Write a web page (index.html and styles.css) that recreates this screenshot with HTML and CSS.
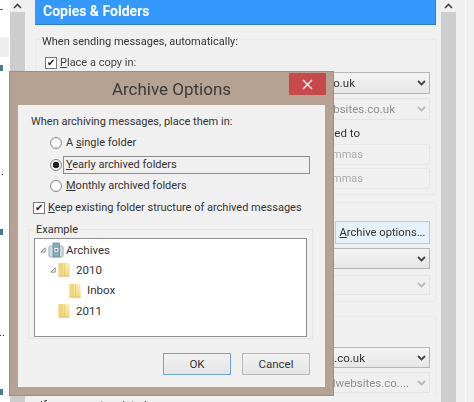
FILE: index.html
```html
<!DOCTYPE html>
<html lang="en">
<head>
<meta charset="utf-8">
<title>Archive Options</title>
<link rel="stylesheet" href="styles.css">
</head>
<body>
<svg class="defs" width="0" height="0" aria-hidden="true">
  <defs>
    <linearGradient id="fg" x1="0" y1="0" x2="0" y2="1"><stop offset="0" stop-color="#fbeeb0"/><stop offset="1" stop-color="#f3d77e"/></linearGradient>
    <symbol id="folder" viewBox="0 0 14 16">
      <path d="M1 2.5 Q1 1 2.5 1 H8 V15 H2 Q1 15 1 14 Z" fill="#f1d47c"/>
      <path d="M6 1 H11 Q13 1 13 3 V15 H6 Z" fill="url(#fg)"/>
      <path d="M1 14.5 H13 V15.6 H1 Z" fill="#dcbc62"/>
      <path d="M7.5 1 V15" stroke="#e3c66f" stroke-width=".8"/>
    </symbol>
    <symbol id="twisty" viewBox="0 0 7 7">
      <path d="M6 1 V6 H1 Z" fill="none" stroke="#777" stroke-width="1"/>
    </symbol>
    <symbol id="caret" viewBox="0 0 9 6">
      <path d="M1 1 L4.5 4.5 L8 1" fill="none" stroke="currentColor" stroke-width="1.8"/>
    </symbol>
  </defs>
</svg>

<div class="app">
  <aside class="nav">
    <span class="mark mark-dash">-</span>
    <span class="nav-row"></span>
    <span class="mark mark-a"></span>
    <span class="mark mark-dot">.</span>
    <span class="mark mark-b"></span>
    <span class="mark mark-dots">..</span>
    <span class="mark mark-c"></span>
  </aside>

  <div class="scroll"><span class="scroll-btn"><svg class="up" viewBox="0 0 9 6"><path d="M1 5 L4.5 1.5 L8 5" fill="none" stroke="#444" stroke-width="1.6"/></svg></span><span class="scroll-track"></span></div>

  <main class="main">
    <h1 class="banner">Copies &amp; Folders</h1>

    <section class="group group-one">
      <p class="legend">When sending messages, automatically:</p>
      <label class="check-row"><span class="check">✔</span><span><u>P</u>lace a copy in:</span></label>
      <div class="select sel-a"><span>.co.uk</span><svg class="caret"><use href="#caret"/></svg></div>
      <div class="select off sel-b"><span>websites.co.uk</span><svg class="caret"><use href="#caret"/></svg></div>
      <p class="note">ied to</p>
      <div class="input"><span>mmas</span></div>
      <div class="input in-two"><span>mmas</span></div>
    </section>

    <section class="group group-two">
      <button class="archive-btn" type="button"><u>A</u>rchive options...</button>
      <div class="select sel-c"><span></span><svg class="caret"><use href="#caret"/></svg></div>
      <div class="select off sel-d"><span></span><svg class="caret"><use href="#caret"/></svg></div>
    </section>

    <section class="group group-three">
      <div class="select sel-e"><span>s.co.uk</span><svg class="caret"><use href="#caret"/></svg></div>
      <div class="select off sel-f"><span>edwebsites.co....</span><svg class="caret"><use href="#caret"/></svg></div>
    </section>
    <p class="cut">If you are not updated</p>
  </main>

  <div class="scroll scroll-right"><span class="scroll-btn"><svg class="up" viewBox="0 0 9 6"><path d="M1 5 L4.5 1.5 L8 5" fill="none" stroke="#444" stroke-width="1.6"/></svg></span><span class="scroll-track"></span></div>
  <div class="edge"></div>
</div>

<div class="dialog" role="dialog">
  <header class="dialog-head">
    <span class="dialog-title">Archive Options</span>
    <span class="close">
      <svg width="11" height="11" viewBox="0 0 11 11"><path d="M1 1 L10 10 M10 1 L1 10" stroke="#fff" stroke-width="1.4"/></svg>
    </span>
  </header>
  <div class="dialog-body">
    <p class="intro">When archiving messages, place them in:</p>
    <div class="radios">
      <label class="radio-row"><span class="radio"></span><span class="radio-text">A <u>s</u>ingle folder</span></label>
      <label class="radio-row"><span class="radio on"></span><span class="radio-text focus"><u>Y</u>early archived folders</span></label>
      <label class="radio-row"><span class="radio"></span><span class="radio-text"><u>M</u>onthly archived folders</span></label>
    </div>
    <label class="keep-row"><span class="check">✔</span><span><u>K</u>eep existing folder structure of archived messages</span></label>
    <fieldset class="example">
      <legend>Example</legend>
      <ul class="tree">
        <li class="node">
          <svg class="twisty"><use href="#twisty"/></svg>
          <svg class="arch" viewBox="0 0 16 16" width="16" height="16">
            <rect x="1" y="4" width="14" height="11" rx="1.5" fill="#d5dde2" stroke="#9aa7b0"/>
            <rect x="5" y="1" width="6.5" height="14" fill="#7fb0bd" stroke="#5e8c9b" stroke-width=".7"/>
            <rect x="6.5" y="6" width="3.6" height="3.6" fill="#fff"/>
            <rect x="7.4" y="7" width="1.8" height="1.8" fill="#a8497c"/>
          </svg>
          <span>Archives</span>
        </li>
        <li class="node lvl1">
          <svg class="twisty"><use href="#twisty"/></svg>
          <svg class="folder"><use href="#folder"/></svg>
          <span>2010</span>
        </li>
        <li class="node lvl2">
          <svg class="folder"><use href="#folder"/></svg>
          <span>Inbox</span>
        </li>
        <li class="node lvl1b">
          <svg class="folder"><use href="#folder"/></svg>
          <span>2011</span>
        </li>
      </ul>
    </fieldset>
    <div class="actions">
      <button class="btn btn-ok" type="button">OK</button>
      <button class="btn" type="button">Cancel</button>
    </div>
  </div>
</div>
</body>
</html>
```

FILE: styles.css
```css
* { box-sizing: border-box; }
html, body { margin: 0; height: 402px; overflow: hidden; }
body {
  position: relative;
  width: 474px;
  background: #f0f0f0;
  color: #333;
  font-family: Roboto, "Open Sans", sans-serif;
  font-size: 11px;
  line-height: 16px;
  filter: blur(0.35px);
}
p, h1, ul { margin: 0; padding: 0; }
u { text-underline-offset: 1px; }
.defs { position: absolute; }

.app {
  display: grid;
  grid-template-columns: 10px 15px 10px 401px 5px 15px 18px;
  height: 402px;
}

/* left nav sliver */
.nav { position: relative; background: #fff; overflow: hidden; }
.nav-row { position: absolute; left: 0; top: 37px; width: 9px; height: 20px; background: #eeeeee; }
.mark { position: absolute; left: 0; }
.mark-dash { top: 2px; left: 0; color: #222; }
.mark-dot { top: 164px; left: 1px; color: #222; }
.mark-dots { top: 325px; left: -1px; color: #222; }
.mark-a, .mark-b, .mark-c { width: 3px; height: 6px; background: #4a7a90; }
.mark-a { top: 65px; }
.mark-b { top: 229px; }
.mark-c { top: 389px; }

/* scrollbars */
.scroll { display: flex; flex-direction: column; background: #f0f0f0; }
.scroll-right { grid-column: 6; }
.scroll-btn { display: flex; align-items: flex-start; justify-content: center; height: 12px; flex: none; padding-top: 3px; }
.up { width: 9px; height: 6px; }
.scroll-track { flex: 1; background: #cdcdcd; }

.edge { background: linear-gradient(to right, #f0f0f0 9px, #f8f8f8 9px, #f8f8f8 10px, #f0f0f0 10px); }

/* main column */
.main { grid-column: 4; min-width: 0; overflow: hidden; height: 402px; }
.banner {
  height: 25px;
  padding-left: 8px;
  background: #3399ff;
  border-bottom: 1px solid #2f7fc4;
  border-right: 1px solid #2f7fc4;
  color: #fff;
  font-size: 14px;
  font-weight: 700;
  line-height: 22px;
}
.group { border: 1px solid #e9e9e9; padding: 0 3px 0 6px; }
.group-one { height: 156px; margin-top: 14px; }
.legend { margin-top: -6px; background: #f0f0f0; width: max-content; line-height: 16px; color: #333; }
.check-row { display: flex; align-items: center; gap: 3px; margin: 5px 0 0 3px; height: 16px; color: #444; }
.check {
  display: inline-flex;
  align-items: center;
  justify-content: center;
  width: 12px;
  height: 12px;
  flex: none;
  background: #fff;
  border: 1px solid #777;
  color: #222;
  font-size: 10px;
  line-height: 10px;
}
.select {
  display: flex;
  justify-content: flex-end;
  align-items: center;
  height: 22px;
  margin: 0 2px 0 24px;
  padding-right: 3px;
  background: linear-gradient(#f4f4f4, #e6e6e6);
  border: 1px solid #b5b5b5;
  color: #333;
  font-size: 11.5px;
}
.select span { white-space: nowrap; }
.select .caret { width: 9px; height: 6px; color: #444; flex: none; margin-left: 64px; }
.select.off { background: #efefef; border-color: #e3e3e3; color: #8f8f8f; margin-top: 4px; }
.select.off .caret { color: #bbb; }
.sel-a { margin-top: 1px; }
.select.sel-a .caret { margin-left: 62px; }
.select.sel-b .caret { margin-left: 22px; }
.note { margin: 5px 2px 0 0; height: 16px; text-align: right; padding-right: 70px; color: #333; font-size: 11.5px; white-space: nowrap; }
.input {
  height: 21px;
  margin: 3px 2px 0 24px;
  padding-right: 66px;
  border: 1px solid #e6e6e6;
  background: #f0f0f0;
  color: #aaa;
  display: flex;
  justify-content: flex-end;
  align-items: center;
  white-space: nowrap;
}
.in-two { margin-top: 3px; }

.group-two { height: 100px; margin-top: 7px; padding-top: 18px; }
.archive-btn {
  display: block;
  width: 95px;
  height: 23px;
  margin: 0 2px 4px auto;
  padding: 0;
  background: #e5f1fb;
  border: 1px solid #a5cfec;
  color: #333;
  font: inherit;
  font-size: 11.2px;
  white-space: nowrap;
}
.sel-c { height: 21px; }
.select.sel-d { height: 20px; margin-top: 6px; }

.group-three { height: 80px; margin-top: 14px; padding-top: 30px; border-bottom: 0; }
.sel-e { height: 21px; }
.select.sel-e .caret { margin-left: 52px; }
.sel-f { height: 21px; }
.select.sel-f .caret { margin-left: 8px; }
.cut { margin: 2px 0 0 5px; color: #222; }

/* dialog */
.dialog {
  position: absolute;
  left: 10px;
  top: 72px;
  width: 323px;
  height: 323px;
  display: flex;
  flex-direction: column;
  background: #b5a292;
  box-shadow: 0 0 0 1px #a08f80;
}
.dialog-head { position: relative; height: 33px; flex: none; text-align: center; }
.dialog-title { display: block; padding: 5px 0 0 0; color: #3a3a3a; font-size: 17px; line-height: 24px; }
.close {
  position: absolute;
  right: 7px;
  top: 1px;
  width: 37px;
  height: 22px;
  display: flex;
  align-items: center;
  justify-content: center;
  background: #c9484a;
}
.dialog-body {
  flex: 1;
  margin: 0 8px 8px;
  padding: 9px 0 0 13px;
  background: #f0f0f0;
  color: #333;
}
.intro { line-height: 16px; white-space: nowrap; }
.radios { display: flex; flex-direction: column; gap: 3px; margin: 4px 0 0 19px; }
.radio-row { display: flex; align-items: center; gap: 1px; height: 18.5px; }
.radio {
  width: 12px;
  height: 12px;
  flex: none;
  border-radius: 50%;
  background: #fff;
  border: 1px solid #8a8a8a;
  box-shadow: inset 0 0 1px #bbb;
}
.radio.on { background: radial-gradient(circle, #222 0 3px, #fff 3.6px); }
.radio-text { padding-left: 3px; }
.radio-text.focus { width: 247px; height: 18px; border: 1px solid #8d8d8d; line-height: 16px; padding-left: 2px; }
.keep-row { display: flex; align-items: center; gap: 3px; margin: 4px 0 0 2px; height: 16px; white-space: nowrap; }
.example {
  width: 285px;
  height: 115px;
  margin: 8px 0 0 -3px;
  padding: 0 5px;
  border: 1px solid #e6e6e6;
}
.example legend { padding: 0 1px; margin-left: 1px; line-height: 12px; height: 12px; }
.tree {
  list-style: none;
  height: 99px;
  margin-top: 2px;
  padding-top: 1px;
  background: #fff;
  border: 1px solid #8f8f8f;
}
.node { display: flex; align-items: center; height: 20.3px; padding-left: 5px; font-size: 11.5px; color: #333; }
.twisty { width: 6px; height: 6px; flex: none; margin-right: 2px; }
.arch { flex: none; margin-right: 2px; }
.folder { width: 14px; height: 15px; flex: none; margin-right: 5px; }
.lvl1 { padding-left: 15px; }
.lvl1 .twisty { margin-right: 1px; }
.lvl2 { padding-left: 33px; }
.lvl1b { padding-left: 22px; }
.actions { display: flex; justify-content: flex-end; gap: 11px; margin: 14px 15px 0 0; }
.btn {
  width: 68px;
  height: 22px;
  padding: 0;
  background: linear-gradient(#f2f2f2, #e4e4e4);
  border: 1px solid #b8b8b8;
  color: #333;
  font: inherit;
  font-size: 11.5px;
}
.btn-ok { border-color: #6aa6dc; }
```
